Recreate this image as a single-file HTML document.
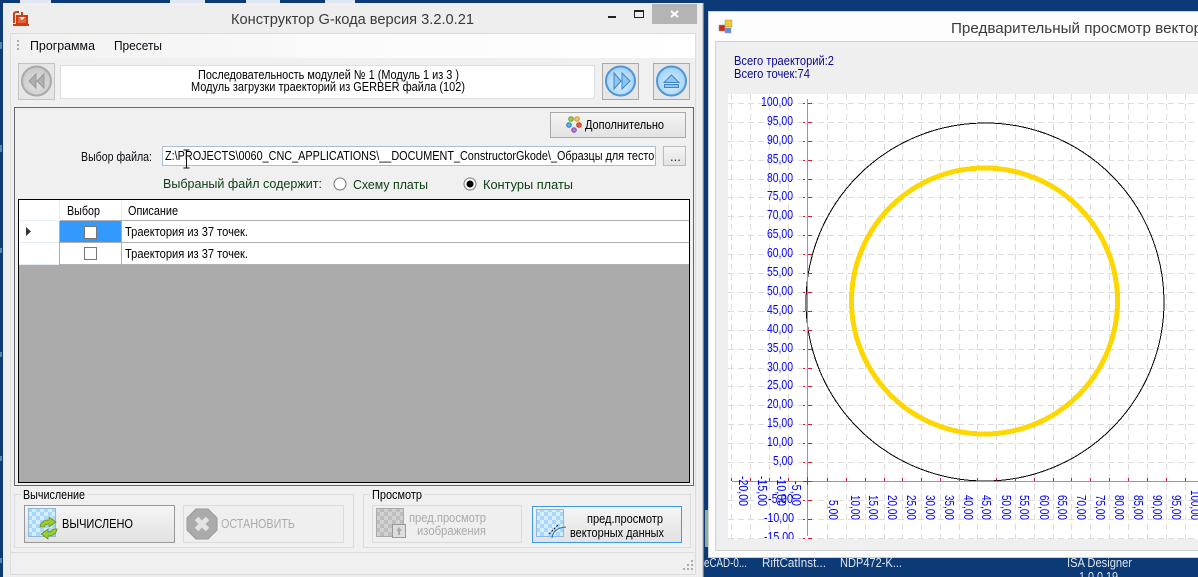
<!DOCTYPE html>
<html><head><meta charset="utf-8"><title>Конструктор G-кода</title>
<style>html,body{margin:0;padding:0;background:#0b3a76;overflow:hidden}svg{display:block}text{white-space:pre}</style></head>
<body>
<svg xmlns="http://www.w3.org/2000/svg" width="1198" height="577" viewBox="0 0 1198 577" font-family="'Liberation Sans',sans-serif" font-size="13">
<defs>
<pattern id="chk" width="8" height="8" patternUnits="userSpaceOnUse"><rect width="8" height="8" fill="#d6ecff"/><rect width="4" height="4" fill="#a9d6fb"/><rect x="4" y="4" width="4" height="4" fill="#a9d6fb"/></pattern>
<pattern id="chkg" width="8" height="8" patternUnits="userSpaceOnUse"><rect width="8" height="8" fill="#d2d2d2"/><rect width="4" height="4" fill="#bdbdbd"/><rect x="4" y="4" width="4" height="4" fill="#bdbdbd"/></pattern>
<linearGradient id="btn" x1="0" y1="0" x2="0" y2="1"><stop offset="0" stop-color="#f5f5f5"/><stop offset="1" stop-color="#e2e2e2"/></linearGradient>
<linearGradient id="menu" x1="0" y1="0" x2="1" y2="0"><stop offset="0" stop-color="#f1f1f1"/><stop offset=".5" stop-color="#fbfbfb"/><stop offset="1" stop-color="#fff"/></linearGradient>
<radialGradient id="blue" cx=".5" cy=".6" r=".6"><stop offset="0" stop-color="#d8eeff"/><stop offset="1" stop-color="#a0d0f6"/></radialGradient>
<radialGradient id="grey" cx=".5" cy=".6" r=".6"><stop offset="0" stop-color="#e2e2e2"/><stop offset="1" stop-color="#c8c8c8"/></radialGradient>
<clipPath id="plot"><rect x="728" y="94" width="470" height="445"/></clipPath>
</defs>

<!-- desktop -->
<rect width="1198" height="577" fill="#0b3a76"/>
<g fill="#dfe8f2"><rect x="20" y="0" width="31" height="3"/><rect x="170" y="0" width="35" height="3"/><rect x="246" y="0" width="34" height="3"/><rect x="325" y="0" width="30" height="3"/></g>
<g fill="#5f80ab"><rect x="0" y="42" width="2" height="7"/><rect x="0" y="145" width="2" height="7"/><rect x="0" y="248" width="2" height="5"/><rect x="0" y="352" width="2" height="5"/><rect x="0" y="456" width="2" height="5"/><rect x="0" y="558" width="2" height="5"/></g>
<rect x="705" y="510" width="3" height="37" fill="#8fae9c"/>
<g fill="#dfe6ef">
<text x="704" y="567" textLength="43" lengthAdjust="spacingAndGlyphs">eCAD-0...</text>
<text x="762" y="567" textLength="64" lengthAdjust="spacingAndGlyphs">RiftCatInst...</text>
<text x="840" y="567" textLength="62" lengthAdjust="spacingAndGlyphs">NDP472-K...</text>
<text x="1067" y="567" textLength="65" lengthAdjust="spacingAndGlyphs">ISA Designer</text>
<text x="1079" y="581" textLength="39" lengthAdjust="spacingAndGlyphs">1.0.0.19</text>
</g>

<!-- window 1 -->
<rect x="3" y="3" width="700" height="574" fill="#eeeeee"/>
<rect x="702" y="3" width="1.5" height="574" fill="#cfcfcf"/>
<text x="231" y="24" font-size="15" fill="#3a3a3a" textLength="243" lengthAdjust="spacingAndGlyphs">Конструктор G-кода версия 3.2.0.21</text>
<!-- window 1 icon -->
<g fill="none" stroke="#cc3d12" stroke-width="2"><path d="M14 23V14Q14 12 17 12H19"/><rect x="17" y="16" width="10" height="8" fill="#e8623a"/><path d="M13 25H29"/><path d="M22 12V18"/></g>
<path d="M19 17H25L22 20Z" fill="#fff"/>
<!-- caption buttons -->
<rect x="608" y="16" width="8" height="2" fill="#222"/>
<rect x="634.500" y="11.500" width="9" height="6" fill="none" stroke="#222"/><rect x="634" y="10" width="10" height="2" fill="#222"/>
<rect x="652" y="4" width="45" height="20" fill="#b4b4b4"/>
<path d="M671 11L678 17M678 11L671 17" stroke="#fff" stroke-width="2" fill="none"/>

<!-- client -->
<rect x="10.500" y="33.500" width="685" height="541" fill="#f0f0f0" stroke="#dcdcdc"/>
<rect x="11" y="34" width="684" height="24" fill="url(#menu)"/>
<g fill="#aaa"><rect x="17" y="40" width="2" height="2"/><rect x="17" y="44" width="2" height="2"/><rect x="17" y="48" width="2" height="2"/></g>
<text x="30" y="50" textLength="65" lengthAdjust="spacingAndGlyphs" fill="#0a0a14">Программа</text>
<text x="114" y="50" textLength="48" lengthAdjust="spacingAndGlyphs" fill="#0a0a14">Пресеты</text>

<!-- toolbar -->
<rect x="18.500" y="63.500" width="36" height="36" fill="#e6e6e6" stroke="#c4c4c4"/>
<circle cx="36.500" cy="81" r="14.500" fill="url(#grey)" stroke="#aaa" stroke-width="2"/>
<path d="M36 74L29 81L36 88ZM44 74L37 81L44 88Z" fill="#b0b0b0" stroke="#999"/>
<rect x="60.500" y="65.500" width="534" height="33" fill="#fff" stroke="#c4c4c4" stroke-dasharray="1 1"/>
<g fill="#000">
<text x="198" y="79" textLength="261" lengthAdjust="spacingAndGlyphs">Последовательность модулей № 1 (Модуль 1 из 3 )</text>
<text x="191" y="91" textLength="274" lengthAdjust="spacingAndGlyphs">Модуль загрузки траекторий из GERBER файла (102)</text>
</g>
<rect x="602.500" y="63.500" width="36" height="36" fill="#e6e6e6" stroke="#aaa"/>
<circle cx="620.500" cy="81" r="14.500" fill="url(#blue)" stroke="#4f97d6" stroke-width="2"/>
<path d="M614 73L621 81L614 89ZM622 73L630 81L622 89Z" fill="#8ec6f2" stroke="#3f86c8"/>
<rect x="653.500" y="63.500" width="36" height="36" fill="#e6e6e6" stroke="#aaa"/>
<circle cx="671.500" cy="81" r="14.500" fill="url(#blue)" stroke="#4f97d6" stroke-width="2"/>
<path d="M671.500 75L664 82.500H679Z" fill="#8ec6f2" stroke="#3f86c8"/>
<rect x="664.500" y="84.500" width="14" height="3" fill="#8ec6f2" stroke="#3f86c8"/>

<!-- main panel -->
<rect x="14.500" y="107.500" width="679" height="378" fill="#f0f0f0" stroke="#666"/>
<rect x="550.500" y="112.500" width="135" height="25" fill="url(#btn)" stroke="#aaa"/>
<g stroke-width="1"><circle cx="571" cy="119" r="2.300" fill="#9ccc50" stroke="#6a9a2a"/><circle cx="577" cy="119" r="2.300" fill="#f3c560" stroke="#d09a2a"/><circle cx="579" cy="125" r="2.300" fill="#e85a44" stroke="#c03a2a"/><circle cx="569" cy="125" r="2.300" fill="#5ab0e8" stroke="#2a80c0"/><circle cx="574" cy="130" r="2.300" fill="#b07cd8" stroke="#8a50b0"/></g>
<text x="585" y="129" textLength="79" lengthAdjust="spacingAndGlyphs" fill="#000">Дополнительно</text>
<text x="81" y="161" textLength="71" lengthAdjust="spacingAndGlyphs" fill="#0a0a14">Выбор файла:</text>
<rect x="162.500" y="146.500" width="493" height="19" fill="#fff" stroke="#a9bdd6"/>
<svg x="164" y="147" width="491" height="18"><text x="1" y="13" textLength="495" lengthAdjust="spacingAndGlyphs" fill="#000">Z:\PROJECTS\0060_CNC_APPLICATIONS\__DOCUMENT_ConstructorGkode\_Образцы для тестов</text></svg>
<path d="M186.500 150V168M183.500 150H189.500M183.500 168H189.500" stroke="#111" fill="none"/>
<rect x="663.500" y="146.500" width="22" height="19" fill="url(#btn)" stroke="#bbb"/>
<text x="670" y="161" fill="#222">...</text>
<text x="163" y="188" textLength="159" lengthAdjust="spacingAndGlyphs" fill="#0c3c12">Выбраный файл содержит:</text>
<circle cx="340" cy="184" r="6" fill="#fff" stroke="#777"/>
<text x="353" y="189" textLength="75" lengthAdjust="spacingAndGlyphs" fill="#0c3c12">Схему платы</text>
<circle cx="470" cy="184" r="6" fill="#fff" stroke="#777"/><circle cx="470" cy="184" r="3.500" fill="#000"/>
<text x="483" y="189" textLength="90" lengthAdjust="spacingAndGlyphs" fill="#0c3c12">Контуры платы</text>

<!-- grid -->
<rect x="18.500" y="199.500" width="671" height="283" fill="#ababab" stroke="#000"/>
<rect x="19" y="200" width="670" height="65" fill="#fff"/>
<rect x="60" y="221" width="61" height="21" fill="#3399ff"/>
<path d="M60 220.500H689M60 242.500H689M60 264.500H689M59.500 221V265M121.500 221V265" stroke="#b0b0b0" fill="none"/>
<path d="M19 220.500H59M19 242.500H59M19 264.500H59" stroke="#e4ecf6" fill="none"/>
<path d="M59.500 200V220M121.500 200V220" stroke="#e4ecf6" fill="none"/>
<path d="M26 227L31 231.500L26 236Z" fill="#333"/>
<text x="67" y="215" textLength="33" lengthAdjust="spacingAndGlyphs" fill="#000">Выбор</text>
<text x="128" y="215" textLength="50" lengthAdjust="spacingAndGlyphs" fill="#000">Описание</text>
<rect x="84.500" y="226.500" width="12" height="12" fill="#fff" stroke="#777"/>
<rect x="84.500" y="247.500" width="12" height="12" fill="#fff" stroke="#777"/>
<text x="125" y="236" textLength="123" lengthAdjust="spacingAndGlyphs" fill="#000">Траектория из 37 точек.</text>
<text x="125" y="258" textLength="123" lengthAdjust="spacingAndGlyphs" fill="#000">Траектория из 37 точек.</text>

<!-- group Вычисление -->
<rect x="14.500" y="494.500" width="339" height="53" fill="none" stroke="#dcdcdc"/>
<rect x="21" y="490" width="66" height="10" fill="#f0f0f0"/>
<text x="23" y="499" textLength="62" lengthAdjust="spacingAndGlyphs" fill="#000">Вычисление</text>
<rect x="24.500" y="505.500" width="150" height="37" fill="url(#btn)" stroke="#999"/>
<rect x="28.500" y="508.500" width="27" height="28" fill="url(#chk)" stroke="#8db8dc"/>
<path d="M40 527Q41 520 49 520V517L56 522L49 527V524Q45 524 44 527Z" fill="#9ccc30" stroke="#5e8f1c" stroke-width=".8"/>
<path d="M57 529Q56 536 48 536V539L41 534L48 529V532Q52 532 53 529Z" fill="#9ccc30" stroke="#5e8f1c" stroke-width=".8"/>
<text x="62" y="528" textLength="71" lengthAdjust="spacingAndGlyphs" fill="#000">ВЫЧИСЛЕНО</text>
<rect x="183.500" y="505.500" width="160" height="37" fill="#efefef" stroke="#dcdcdc"/>
<path d="M196 509H208L217 518V530L208 539H196L187 530V518Z" fill="#ababab" stroke="#9a9a9a"/>
<path d="M196.500 518.500L207.500 529.500M207.500 518.500L196.500 529.500" stroke="#e4e4e4" stroke-width="5" fill="none"/>
<text x="221" y="528" textLength="74" lengthAdjust="spacingAndGlyphs" fill="#aaa">ОСТАНОВИТЬ</text>

<!-- group Просмотр -->
<rect x="363.500" y="494.500" width="327" height="53" fill="none" stroke="#dcdcdc"/>
<rect x="370" y="490" width="54" height="10" fill="#f0f0f0"/>
<text x="372" y="499" textLength="50" lengthAdjust="spacingAndGlyphs" fill="#000">Просмотр</text>
<rect x="372.500" y="505.500" width="149" height="37" fill="#efefef" stroke="#dcdcdc"/>
<rect x="376.500" y="508.500" width="27" height="28" fill="url(#chkg)" stroke="#aaa"/>
<rect x="392.500" y="524.500" width="13" height="13" fill="#ddd" stroke="#999"/>
<path d="M399 527L402 531H400V535H398V531H396Z" fill="#aaa"/>
<text x="409" y="522" textLength="77" lengthAdjust="spacingAndGlyphs" fill="#aaa">пред.просмотр</text>
<text x="417" y="535" textLength="69" lengthAdjust="spacingAndGlyphs" fill="#aaa">изображения</text>
<rect x="532.500" y="506.500" width="149" height="36" fill="url(#btn)" stroke="#3a9bf0"/>
<rect x="536.500" y="509.500" width="27" height="27" fill="url(#chk)" stroke="#8db8dc"/>
<path d="M549 534L559 524" stroke="#222" stroke-dasharray="2 1.500" fill="none"/>
<path d="M552 538Q553 528 566 527" stroke="#2a6aa8" fill="none"/>
<text x="587" y="523" textLength="76" lengthAdjust="spacingAndGlyphs" fill="#000">пред.просмотр</text>
<text x="570" y="537" textLength="94" lengthAdjust="spacingAndGlyphs" fill="#000">векторных данных</text>

<!-- status -->
<path d="M11 552.500H695" stroke="#dcdcdc"/>
<g fill="#aaa"><rect x="691" y="560" width="2" height="2"/><rect x="687" y="564" width="2" height="2"/><rect x="691" y="564" width="2" height="2"/><rect x="683" y="568" width="2" height="2"/><rect x="687" y="568" width="2" height="2"/><rect x="691" y="568" width="2" height="2"/></g>

<!-- window 2 -->
<rect x="708" y="11" width="490" height="546" fill="#fdfdfd"/>
<path d="M708.500 11V557M708 11.500H1198M708 557.500H1198" stroke="#cfcfcf" fill="none"/>
<rect x="719" y="25" width="6" height="6" fill="#cc2a1a" stroke="#999" stroke-width=".5"/>
<rect x="725" y="20" width="7" height="7" fill="#f2c92c" stroke="#a88" stroke-width=".5"/>
<rect x="725" y="28" width="6" height="5" fill="#5a90e0" stroke="#999" stroke-width=".5"/>
<text x="951" y="33" font-size="15" fill="#3a3a3a" textLength="278" lengthAdjust="spacingAndGlyphs">Предварительный просмотр векторных</text>
<rect x="715.500" y="41.500" width="490" height="509" fill="#efefef" stroke="#d0d0d0"/>
<text x="734" y="65" fill="#0a0a90" textLength="100" lengthAdjust="spacingAndGlyphs">Всего траекторий:2</text>
<text x="734" y="78" fill="#0a0a90" textLength="76" lengthAdjust="spacingAndGlyphs">Всего точек:74</text>

<!-- plot -->
<rect x="728" y="94" width="470" height="445" fill="#fff"/>
<g clip-path="url(#plot)">
<path d="M728 103.500H1198M728 122.500H1198M728 141.500H1198M728 160.500H1198M728 179.500H1198M728 197.500H1198M728 216.500H1198M728 235.500H1198M728 254.500H1198M728 273.500H1198M728 292.500H1198M728 311.500H1198M728 330.500H1198M728 349.500H1198M728 368.500H1198M728 386.500H1198M728 405.500H1198M728 424.500H1198M728 443.500H1198M728 462.500H1198M728 500.500H1198M728 519.500H1198M728 538.500H1198" stroke="#dcdcdc" stroke-dasharray="6 4" fill="none"/>
<path d="M731.500 94V539M750.500 94V539M769.500 94V539M788.500 94V539M827.500 94V539M846.500 94V539M865.500 94V539M884.500 94V539M902.500 94V539M921.500 94V539M940.500 94V539M959.500 94V539M977.500 94V539M996.500 94V539M1015.500 94V539M1034.500 94V539M1053.500 94V539M1071.500 94V539M1090.500 94V539M1109.500 94V539M1128.500 94V539M1147.500 94V539M1166.500 94V539M1185.500 94V539" stroke="#dcdcdc" stroke-dasharray="6 4" fill="none"/>
<circle cx="985" cy="302" r="179" fill="none" stroke="#000" stroke-width="1" shape-rendering="crispEdges"/>
<circle cx="984.500" cy="301" r="133" fill="none" stroke="#ffd700" stroke-width="5" shape-rendering="crispEdges"/>
<path d="M807.500 99V536M732 481.500H1198" stroke="#6f9be8" fill="none"/>
<path d="M803 103.500H805M808 103.500H812M803 122.500H805M808 122.500H812M803 141.500H805M808 141.500H812M803 160.500H805M808 160.500H812M803 179.500H805M808 179.500H812M803 197.500H805M808 197.500H812M803 216.500H805M808 216.500H812M803 235.500H805M808 235.500H812M803 254.500H805M808 254.500H812M803 273.500H805M808 273.500H812M803 292.500H805M808 292.500H812M803 311.500H805M808 311.500H812M803 330.500H805M808 330.500H812M803 349.500H805M808 349.500H812M803 368.500H805M808 368.500H812M803 386.500H805M808 386.500H812M803 405.500H805M808 405.500H812M803 424.500H805M808 424.500H812M803 443.500H805M808 443.500H812M803 462.500H805M808 462.500H812M803 481.500H812M803 500.500H805M808 500.500H812M803 519.500H805M808 519.500H812M803 538.500H805M808 538.500H812" stroke="#dc143c" fill="none"/>
<path d="M731.500 478V481M750.500 478V481M769.500 478V481M788.500 478V481M807.500 477V485M827.500 478V481M846.500 478V481M865.500 478V481M884.500 478V481M902.500 478V481M921.500 478V481M940.500 478V481M959.500 478V481M977.500 478V481M996.500 478V481M1015.500 478V481M1034.500 478V481M1053.500 478V481M1071.500 478V481M1090.500 478V481M1109.500 478V481M1128.500 478V481M1147.500 478V481M1166.500 478V481M1185.500 478V481" stroke="#dc143c" fill="none"/>
<g fill="#0000ff" text-anchor="end">
<text x="793" y="106" textLength="32" lengthAdjust="spacingAndGlyphs">100,00</text>
<text x="793" y="125" textLength="26" lengthAdjust="spacingAndGlyphs">95,00</text>
<text x="793" y="144" textLength="26" lengthAdjust="spacingAndGlyphs">90,00</text>
<text x="793" y="163" textLength="26" lengthAdjust="spacingAndGlyphs">85,00</text>
<text x="793" y="182" textLength="26" lengthAdjust="spacingAndGlyphs">80,00</text>
<text x="793" y="200" textLength="26" lengthAdjust="spacingAndGlyphs">75,00</text>
<text x="793" y="219" textLength="26" lengthAdjust="spacingAndGlyphs">70,00</text>
<text x="793" y="238" textLength="26" lengthAdjust="spacingAndGlyphs">65,00</text>
<text x="793" y="257" textLength="26" lengthAdjust="spacingAndGlyphs">60,00</text>
<text x="793" y="276" textLength="26" lengthAdjust="spacingAndGlyphs">55,00</text>
<text x="793" y="295" textLength="26" lengthAdjust="spacingAndGlyphs">50,00</text>
<text x="793" y="314" textLength="26" lengthAdjust="spacingAndGlyphs">45,00</text>
<text x="793" y="333" textLength="26" lengthAdjust="spacingAndGlyphs">40,00</text>
<text x="793" y="352" textLength="26" lengthAdjust="spacingAndGlyphs">35,00</text>
<text x="793" y="371" textLength="26" lengthAdjust="spacingAndGlyphs">30,00</text>
<text x="793" y="389" textLength="26" lengthAdjust="spacingAndGlyphs">25,00</text>
<text x="793" y="408" textLength="26" lengthAdjust="spacingAndGlyphs">20,00</text>
<text x="793" y="427" textLength="26" lengthAdjust="spacingAndGlyphs">15,00</text>
<text x="793" y="446" textLength="26" lengthAdjust="spacingAndGlyphs">10,00</text>
<text x="793" y="465" textLength="20" lengthAdjust="spacingAndGlyphs">5,00</text>
<text x="793" y="503" textLength="25" lengthAdjust="spacingAndGlyphs">-5,00</text>
<text x="794" y="522" textLength="30" lengthAdjust="spacingAndGlyphs">-10,00</text>
<text x="794" y="541" textLength="30" lengthAdjust="spacingAndGlyphs">-15,00</text>
</g>
<g fill="#0000ff">
<text transform="translate(739,476) rotate(90)" textLength="30" lengthAdjust="spacingAndGlyphs">-20,00</text>
<text transform="translate(758,476) rotate(90)" textLength="30" lengthAdjust="spacingAndGlyphs">-15,00</text>
<text transform="translate(777,476) rotate(90)" textLength="30" lengthAdjust="spacingAndGlyphs">-10,00</text>
<text transform="translate(792,481) rotate(90)" textLength="25" lengthAdjust="spacingAndGlyphs">-5,00</text>
<text transform="translate(829,500) rotate(90)" textLength="20" lengthAdjust="spacingAndGlyphs">5,00</text>
<text transform="translate(851,495) rotate(90)" textLength="25" lengthAdjust="spacingAndGlyphs">10,00</text>
<text transform="translate(869,495) rotate(90)" textLength="25" lengthAdjust="spacingAndGlyphs">15,00</text>
<text transform="translate(888,495) rotate(90)" textLength="25" lengthAdjust="spacingAndGlyphs">20,00</text>
<text transform="translate(907,495) rotate(90)" textLength="25" lengthAdjust="spacingAndGlyphs">25,00</text>
<text transform="translate(926,495) rotate(90)" textLength="25" lengthAdjust="spacingAndGlyphs">30,00</text>
<text transform="translate(945,495) rotate(90)" textLength="25" lengthAdjust="spacingAndGlyphs">35,00</text>
<text transform="translate(964,495) rotate(90)" textLength="25" lengthAdjust="spacingAndGlyphs">40,00</text>
<text transform="translate(982,495) rotate(90)" textLength="25" lengthAdjust="spacingAndGlyphs">45,00</text>
<text transform="translate(1002,495) rotate(90)" textLength="25" lengthAdjust="spacingAndGlyphs">50,00</text>
<text transform="translate(1020,495) rotate(90)" textLength="25" lengthAdjust="spacingAndGlyphs">55,00</text>
<text transform="translate(1040,495) rotate(90)" textLength="25" lengthAdjust="spacingAndGlyphs">60,00</text>
<text transform="translate(1058,495) rotate(90)" textLength="25" lengthAdjust="spacingAndGlyphs">65,00</text>
<text transform="translate(1077,495) rotate(90)" textLength="25" lengthAdjust="spacingAndGlyphs">70,00</text>
<text transform="translate(1096,495) rotate(90)" textLength="25" lengthAdjust="spacingAndGlyphs">75,00</text>
<text transform="translate(1115,495) rotate(90)" textLength="25" lengthAdjust="spacingAndGlyphs">80,00</text>
<text transform="translate(1134,495) rotate(90)" textLength="25" lengthAdjust="spacingAndGlyphs">85,00</text>
<text transform="translate(1153,495) rotate(90)" textLength="25" lengthAdjust="spacingAndGlyphs">90,00</text>
<text transform="translate(1172,495) rotate(90)" textLength="25" lengthAdjust="spacingAndGlyphs">95,00</text>
<text transform="translate(1191,490) rotate(90)" textLength="30" lengthAdjust="spacingAndGlyphs">100,00</text>
</g>
</g>
</svg>
</body></html>
